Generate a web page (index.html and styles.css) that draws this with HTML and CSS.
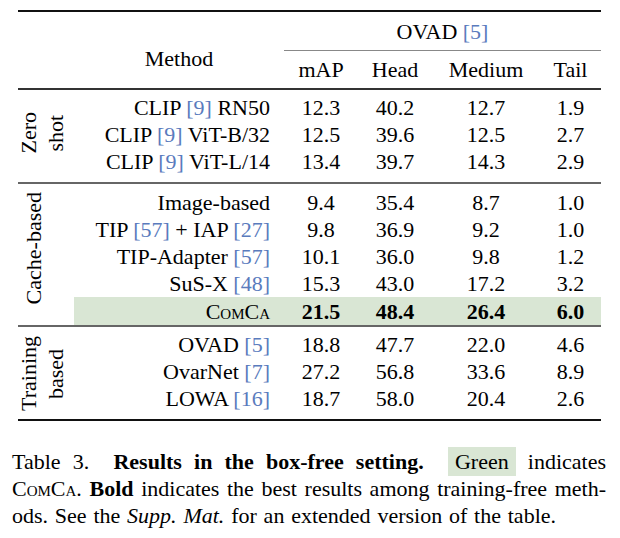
FILE: index.html
```html
<!DOCTYPE html>
<html>
<head>
<meta charset="utf-8">
<link rel="stylesheet" href="styles.css">
</head>
<body>
<table class="results">
  <colgroup>
    <col class="c-group"><col class="c-method"><col class="c-map"><col class="c-head"><col class="c-medium"><col class="c-tail">
  </colgroup>
  <thead>
    <tr class="hrow1">
      <th rowspan="2"></th>
      <th rowspan="2" class="method-h">Method</th>
      <th colspan="4" class="ovad">OVAD <span class="cite">[5]</span></th>
    </tr>
    <tr class="hrow2">
      <th>mAP</th><th>Head</th><th>Medium</th><th>Tail</th>
    </tr>
  </thead>
  <tbody class="g-zero">
    <tr class="first">
      <td rowspan="3" class="group"><div class="vlabel two">Zero<br>shot</div></td>
      <td class="m">CLIP <span class="cite">[9]</span> RN50</td><td>12.3</td><td>40.2</td><td>12.7</td><td>1.9</td>
    </tr>
    <tr><td class="m">CLIP <span class="cite">[9]</span> ViT-B/32</td><td>12.5</td><td>39.6</td><td>12.5</td><td>2.7</td></tr>
    <tr class="last"><td class="m">CLIP <span class="cite">[9]</span> ViT-L/14</td><td>13.4</td><td>39.7</td><td>14.3</td><td>2.9</td></tr>
  </tbody>
  <tbody class="g-cache">
    <tr class="first">
      <td rowspan="5" class="group"><div class="vlabel single">Cache-based</div></td>
      <td class="m">Image-based</td><td>9.4</td><td>35.4</td><td>8.7</td><td>1.0</td>
    </tr>
    <tr><td class="m">TIP <span class="cite">[57]</span> + IAP <span class="cite">[27]</span></td><td>9.8</td><td>36.9</td><td>9.2</td><td>1.0</td></tr>
    <tr><td class="m">TIP-Adapter <span class="cite">[57]</span></td><td>10.1</td><td>36.0</td><td>9.8</td><td>1.2</td></tr>
    <tr><td class="m">SuS-X <span class="cite">[48]</span></td><td>15.3</td><td>43.0</td><td>17.2</td><td>3.2</td></tr>
    <tr class="ours"><td class="m"><span class="sc">ComCa</span></td><td><b>21.5</b></td><td><b>48.4</b></td><td><b>26.4</b></td><td><b>6.0</b></td></tr>
  </tbody>
  <tbody class="g-train">
    <tr class="first">
      <td rowspan="3" class="group"><div class="vlabel two train">Training<br>based</div></td>
      <td class="m">OVAD <span class="cite">[5]</span></td><td>18.8</td><td>47.7</td><td>22.0</td><td>4.6</td>
    </tr>
    <tr><td class="m">OvarNet <span class="cite">[7]</span></td><td>27.2</td><td>56.8</td><td>33.6</td><td>8.9</td></tr>
    <tr class="last"><td class="m">LOWA <span class="cite">[16]</span></td><td>18.7</td><td>58.0</td><td>20.4</td><td>2.6</td></tr>
  </tbody>
</table>
<div class="caption">
  <div class="line just">Table&nbsp;3.&nbsp; <b>Results in the box-free setting.</b>&nbsp; <span class="hl">Green</span> indicates</div>
  <div class="line just"><span class="sc">ComCa</span>. <b>Bold</b> indicates the best results among training-free meth-</div>
  <div class="line last-line">ods. See the <i>Supp. Mat.</i> for an extended version of the table.</div>
</div>
</body>
</html>
```

FILE: styles.css
```css
html, body {
  margin: 0;
  padding: 0;
  background: #fff;
}
body {
  font-family: "Liberation Serif", "Times New Roman", serif;
  font-size: 22px;
  color: #000;
  width: 620px;
}
.results {
  border-collapse: collapse;
  table-layout: fixed;
  width: 583px;
  margin: 10px 0 0 18px;
}
.c-group { width: 56px; }
.c-method { width: 210px; }
.c-map { width: 74px; }
.c-head { width: 74px; }
.c-medium { width: 108px; }
.c-tail { width: 61px; }

.results th, .results td {
  padding: 0;
  font-weight: normal;
  text-align: center;
  line-height: 27px;
  height: 27px;
  white-space: nowrap;
}
.results thead {
  border-top: 2px solid #111;
}
.hrow1 th { height: 38px; }
.hrow2 th { height: 37px; }
.ovad {
  border-bottom: 1px solid #888;
}
.method-h {
  vertical-align: middle;
  padding-top: 16px !important;
}
.g-zero { border-top: 2px solid #333; }
.g-cache, .g-train { border-top: 2px solid #666; }
.g-train { border-bottom: 2px solid #111; }

.results td.m {
  text-align: right;
  padding-right: 14px;
}
.first td { padding-top: 4px; }
.g-cache .first td { padding-top: 5px; }
.last td { padding-bottom: 7px; }
.results td.group {
  padding: 0;
  vertical-align: middle;
  text-align: left;
}

.vlabel {
  writing-mode: vertical-rl;
  transform: rotate(180deg);
  line-height: 27px;
  display: inline-block;
  text-align: center;
}
.vlabel.two { margin-left: -3px; }
.vlabel.single { margin-left: 2px; margin-top: -6px; }
.vlabel.train { margin-top: 6px; }

.ours td {
  background: #d9e6d4;
  height: 28px;
}
.cite { color: #5a7bbd; }
.sc { font-variant: small-caps; }

.caption {
  margin: 27px 0 0 12px;
  width: 594px;
  font-size: 22px;
  line-height: 27px;
}
.line { white-space: nowrap; }
.line.just {
  text-align: justify;
  text-align-last: justify;
  white-space: normal;
}
.last-line { word-spacing: 1.3px; }
.hl {
  background: #d9e6d4;
  padding: 2px 7px;
}
```
